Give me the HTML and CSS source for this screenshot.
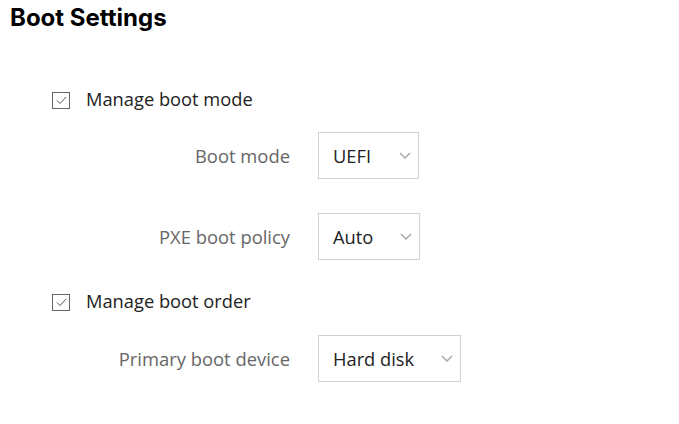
FILE: index.html
```html
<!DOCTYPE html>
<html>
<head>
<meta charset="utf-8">
<link rel="stylesheet" href="styles.css">
</head>
<body>
<section class="page">
  <h1 class="title">Boot Settings</h1>
  <div class="check-row first">
    <span class="checkbox">
      <svg width="11" height="9" viewBox="0 0 11 9"><path d="M1 4.5 L4 7.5 L10 1" fill="none" stroke="#555" stroke-width="1"/></svg>
    </span>
    <span class="check-label">Manage boot mode</span>
  </div>
  <div class="field-row r1">
    <span class="field-label">Boot mode</span>
    <div class="select w100"><span class="select-value">UEFI</span><span class="chev"><svg width="12" height="7" viewBox="0 0 12 7"><path d="M1 1 L6 6 L11 1" fill="none" stroke="#aaa" stroke-width="1.5"/></svg></span></div>
  </div>
  <div class="field-row r2">
    <span class="field-label">PXE boot policy</span>
    <div class="select w101"><span class="select-value">Auto</span><span class="chev"><svg width="12" height="7" viewBox="0 0 12 7"><path d="M1 1 L6 6 L11 1" fill="none" stroke="#aaa" stroke-width="1.5"/></svg></span></div>
  </div>
  <div class="check-row second">
    <span class="checkbox">
      <svg width="11" height="9" viewBox="0 0 11 9"><path d="M1 4.5 L4 7.5 L10 1" fill="none" stroke="#555" stroke-width="1"/></svg>
    </span>
    <span class="check-label">Manage boot order</span>
  </div>
  <div class="field-row r3">
    <span class="field-label">Primary boot device</span>
    <div class="select w142"><span class="select-value">Hard disk</span><span class="chev"><svg width="12" height="7" viewBox="0 0 12 7"><path d="M1 1 L6 6 L11 1" fill="none" stroke="#aaa" stroke-width="1.5"/></svg></span></div>
  </div>
</section>
</body>
</html>
```

FILE: styles.css
```css
html, body {
  margin: 0;
  padding: 0;
  background: #fff;
}
.page {
  font-family: "Open Sans", "Noto Sans", sans-serif;
  color: #333;
  padding: 0 0 0 10px;
}
.title {
  margin: 0;
  padding-top: 5px;
  font-family: Inter, "Open Sans", sans-serif;
  font-size: 24px;
  line-height: 26px;
  font-weight: 700;
  color: #000;
}
.check-row {
  display: flex;
  align-items: center;
  height: 24px;
  padding-left: 42px;
}
.check-row.first { margin-top: 57px; }
.check-row.second { margin-top: 30px; }
.checkbox {
  width: 18px;
  height: 17px;
  box-sizing: border-box;
  border: 1px solid #666;
  display: flex;
  align-items: center;
  justify-content: center;
}
.check-label {
  margin-left: 16px;
  padding-bottom: 4px;
  font-size: 18.3px;
  color: #222;
}
.field-row {
  display: flex;
  align-items: center;
}
.field-row.r1 { margin-top: 20px; }
.field-row.r2 { margin-top: 34px; }
.field-row.r3 { margin-top: 21px; }
.field-label {
  width: 280px;
  text-align: right;
  font-size: 18.4px;
  color: #666;
}
.select {
  margin-left: 28px;
  height: 47px;
  box-sizing: border-box;
  border: 1px solid #d2d2d2;
  display: flex;
  align-items: center;
  justify-content: space-between;
  padding: 0 7px 0 14px;
}
.w100 { width: 101px; }
.w101 { width: 102px; }
.w142 { width: 143px; }
.select-value {
  font-size: 18.3px;
  color: #222;
}
.chev {
  display: flex;
}
```
